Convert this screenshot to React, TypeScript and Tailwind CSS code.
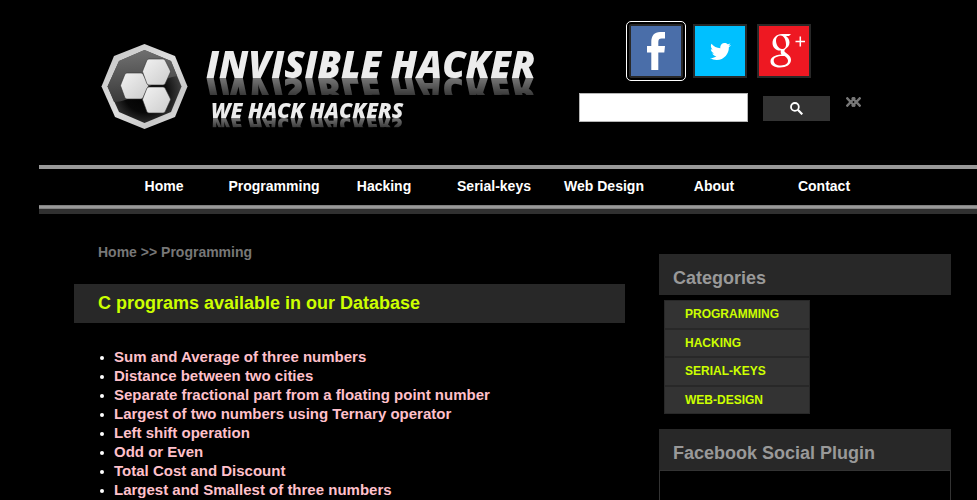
import { FaTwitter } from "react-icons/fa";

const navItems = ["Home", "Programming", "Hacking", "Serial-keys", "Web Design", "About", "Contact"];

const programs = [
  "Sum and Average of three numbers",
  "Distance between two cities",
  "Separate fractional part from a floating point number",
  "Largest of two numbers using Ternary operator",
  "Left shift operation",
  "Odd or Even",
  "Total Cost and Discount",
  "Largest and Smallest of three numbers",
];

const categories = ["PROGRAMMING", "HACKING", "SERIAL-KEYS", "WEB-DESIGN"];

function LogoMark() {
  return (
    <svg viewBox="0 0 88 88" className="h-[88px] w-[88px] shrink-0" aria-hidden="true">
      <defs>
        <linearGradient id="rim" x1="0" y1="0" x2="1" y2="1">
          <stop offset="0" stopColor="#c4c4c4" />
          <stop offset="0.5" stopColor="#dedede" />
          <stop offset="0.75" stopColor="#c8c8c8" />
          <stop offset="1" stopColor="#e6e6e6" />
        </linearGradient>
        <linearGradient id="gloss" x1="0.4" y1="0" x2="0.5" y2="1">
          <stop offset="0" stopColor="#707070" />
          <stop offset="1" stopColor="#383838" />
        </linearGradient>
        <radialGradient id="core" cx="0.5" cy="0.58" r="0.55">
          <stop offset="0" stopColor="#000" />
          <stop offset="0.5" stopColor="#080808" />
          <stop offset="1" stopColor="#4a4a4a" />
        </radialGradient>
        <linearGradient id="cell" x1="0" y1="0" x2="1" y2="1">
          <stop offset="0" stopColor="#f2f2f2" />
          <stop offset="1" stopColor="#cccccc" />
        </linearGradient>
      </defs>
      <path d="M43.500 1 74 13 86.500 43.500 74 74 43.500 86 14 74 .5 43.500 13 13Z" fill="url(#rim)" />
      <path d="M43.500 7 70 18 80.500 43.500 70 69 43.500 80 18 69 6.500 43.500 18 18Z" fill="url(#core)" />
      <path d="M43.500 7 70 18 76 33C60 36 48 43 38 50 29 56 20 59 13 59L6.500 43.500 18 18Z" fill="url(#gloss)" />
      <g fill="url(#cell)" stroke="#333" strokeWidth="0.6">
        <path d="M26 30h14q1 0 2 1l5 10q1 2 0 3l-5 11q-1 1-2 1H26q-1 0-2-1l-4-11q-1-1 0-3l4-10q1-1 2-1Z" />
        <path d="M48 16h14q1 0 2 1l5 10q1 2 0 3l-5 11q-1 1-2 1H48q-1 0-2-1l-4-11q-1-1 0-3l4-10q1-1 2-1Z" />
        <path d="M48 44h14q1 0 2 1l5 10q1 2 0 3l-5 11q-1 1-2 1H48q-1 0-2-1l-4-11q-1-1 0-3l4-10q1-1 2-1Z" />
      </g>
    </svg>
  );
}

function Socials() {
  const box = "flex h-[54px] w-[54px] items-center justify-center border-2 border-[#282828]";
  return (
    <div className="ml-[50px] flex gap-[10px]">
      <a
        href="#facebook"
        aria-label="Facebook"
        className={`${box} rounded-xs bg-[#4a6ea9] outline-1 outline-offset-2 outline-white`}
      >
        <svg viewBox="0 0 50 50" className="h-[50px] w-[50px]" fill="#fff" aria-hidden="true">
          <path d="M20.300 44V26.500H16V20H20.300V16C20.300 9.500 23.500 6 29 6H34V12.500H30.500C28.300 12.500 27.300 13.500 27.300 16V20H34L33.300 26.500H27.300V44Z" />
        </svg>
      </a>
      <a href="#twitter" aria-label="Twitter" className={`${box} bg-[#00c0ff] text-white`}>
        <FaTwitter size={21} />
      </a>
      <a href="#google-plus" aria-label="Google Plus" className={`${box} bg-[#ee1822]`}>
        <svg viewBox="0 0 50 50" className="h-[50px] w-[50px]" aria-hidden="true">
          <path
            fill="#fff"
            fillRule="evenodd"
            d="M32 8L30 10H27C29.500 12 30.500 14 30.500 16.500C30.500 20 28.500 21.500 26.500 23C25 24.500 25 25.500 26.500 26.500L29 28.500C31 30 32 31.800 32 34C32 38.500 27.500 41.500 21 41.500C15 41.500 11.500 39 11.500 35.500C11.500 31.500 15 29 22.500 28.500C21.500 27 21.500 25.500 22 24.500C17 25 13.500 21.500 13.500 17C13.500 12 17.500 8 23 8ZM21.500 9.500C18.500 9.500 17 11.500 17 14.500C17 18.500 19.500 23 23 23C26 23 27 21 27 18.500C27 14 25 9.500 21.500 9.500ZM23.500 30C18 30 14.700 31.500 14.700 34.500C14.700 37.500 17.500 39.500 22 39.500C26.500 39.500 29 37.500 29 34.800C29 32.800 27.500 31.500 25.500 30Z"
          />
          <path d="M36.500 15.500H46M41.300 10.500V20.500" stroke="#fff" strokeWidth="1.500" />
        </svg>
      </a>
    </div>
  );
}

function SearchForm() {
  return (
    <form className="mt-[15px] flex" onSubmit={(e) => e.preventDefault()}>
      <input
        type="text"
        aria-label="Search"
        className="h-[29px] w-[169px] border border-[#b5b5b5] bg-white px-2 text-sm text-black"
      />
      <button
        type="submit"
        aria-label="Search"
        className="mt-[3px] ml-[15px] flex h-[25px] w-[67px] items-center justify-center bg-[#333]"
      >
        <svg viewBox="0 0 13 13" className="h-[13px] w-[13px]" fill="none" stroke="#fff" strokeWidth="1.800" aria-hidden="true">
          <circle cx="4.900" cy="4.900" r="3.900" />
          <path d="M7.800 7.800 12.300 12.300" strokeWidth="2.200" />
        </svg>
      </button>
      <button type="reset" aria-label="Clear" className="mt-1 ml-4 h-[10px] w-[15px]">
        <svg viewBox="0 0 15 10" className="h-[10px] w-[15px]" aria-hidden="true">
          <path d="M.5.5 9 9.500M9 .5.5 9.500M6 .5 14.500 9.500M14.500.5 6 9.500" stroke="#777" strokeWidth="2.400" />
        </svg>
      </button>
    </form>
  );
}

function PanelTitle({ children }: { children: string }) {
  return (
    <h2 className="bg-[#282828] px-[14px] pt-[14px] pb-[7px] text-lg leading-5 font-bold text-[#999]">
      {children}
    </h2>
  );
}

export default function App() {
  return (
    <div className="flex min-h-screen flex-col bg-black pl-[39px] font-['Liberation_Sans',Arial,sans-serif]">
      <header className="flex h-[165px] items-start pt-[21px]">
        <a href="#home" className="ml-[62px] flex w-[478px] pt-[22px] font-['Open_Sans',sans-serif] font-extrabold text-[#ececec] italic">
          <LogoMark />
          <span className="ml-[17px] flex flex-col pt-[6px] whitespace-nowrap">
            <span className="h-[29px] text-[37px] leading-[29px] [-webkit-box-reflect:below_0px_linear-gradient(transparent_40%,rgba(255,255,255,0.25)_43%,rgba(255,255,255,0.5))]">
              INVISIBLE HACKER
            </span>
            <span className="mt-[24px] ml-[5px] h-4 text-[21px] leading-4 [-webkit-box-reflect:below_0px_linear-gradient(transparent_40%,rgba(255,255,255,0.25)_43%,rgba(255,255,255,0.5))]">
              WE HACK HACKERS
            </span>
          </span>
        </a>
        <div className="pt-[3px]">
          <Socials />
          <SearchForm />
        </div>
      </header>

      <nav className="border-t-4 border-[#999]">
        <ul className="flex h-9 items-center pb-[2px] pl-[70px] text-sm font-bold text-white">
          {navItems.map((item) => (
            <li key={item} className="w-[110px] text-center">
              <a href="#nav">{item}</a>
            </li>
          ))}
        </ul>
        <div className="h-1 border-y border-[#808080] bg-[#999]" />
        <div className="h-[5px] bg-[#303030]" />
      </nav>

      <main className="flex flex-1 gap-[34px] pr-[26px] pl-[35px]">
        <article className="min-w-0 flex-1">
          <p className="mt-7 pl-6 text-sm font-bold text-[#777]">
            <a href="#home">Home</a> &gt;&gt; <a href="#programming">Programming</a>
          </p>
          <h1 className="mt-[22px] bg-[#282828] pl-6 text-lg leading-[39px] font-bold text-[#cf0]">
            C programs available in our Database
          </h1>
          <ul className="mt-6 pl-[26px] text-[15px] leading-[19px] font-bold text-[#ffc0cb]">
            {programs.map((name) => (
              <li key={name} className="flex items-center gap-[10px]">
                <span className="mt-[3px] h-1 w-1 shrink-0 rounded-full bg-white" />
                <a href="#program">{name}</a>
              </li>
            ))}
          </ul>
        </article>

        <aside className="flex w-[292px] shrink-0 flex-col pt-10">
          <PanelTitle>Categories</PanelTitle>
          <ul className="mt-[5px] ml-[5px] grid h-[114px] w-[146px] grid-rows-4 text-xs font-bold text-[#cf0]">
            {categories.map((name) => (
              <li key={name} className="flex items-center border border-[#282828] bg-[#333] pl-5">
                <a href="#category">{name}</a>
              </li>
            ))}
          </ul>
          <div className="mt-[15px] flex flex-1 flex-col">
            <PanelTitle>Facebook Social Plugin</PanelTitle>
            <div className="flex-1 border border-b-0 border-[#333]" />
          </div>
        </aside>
      </main>
    </div>
  );
}
